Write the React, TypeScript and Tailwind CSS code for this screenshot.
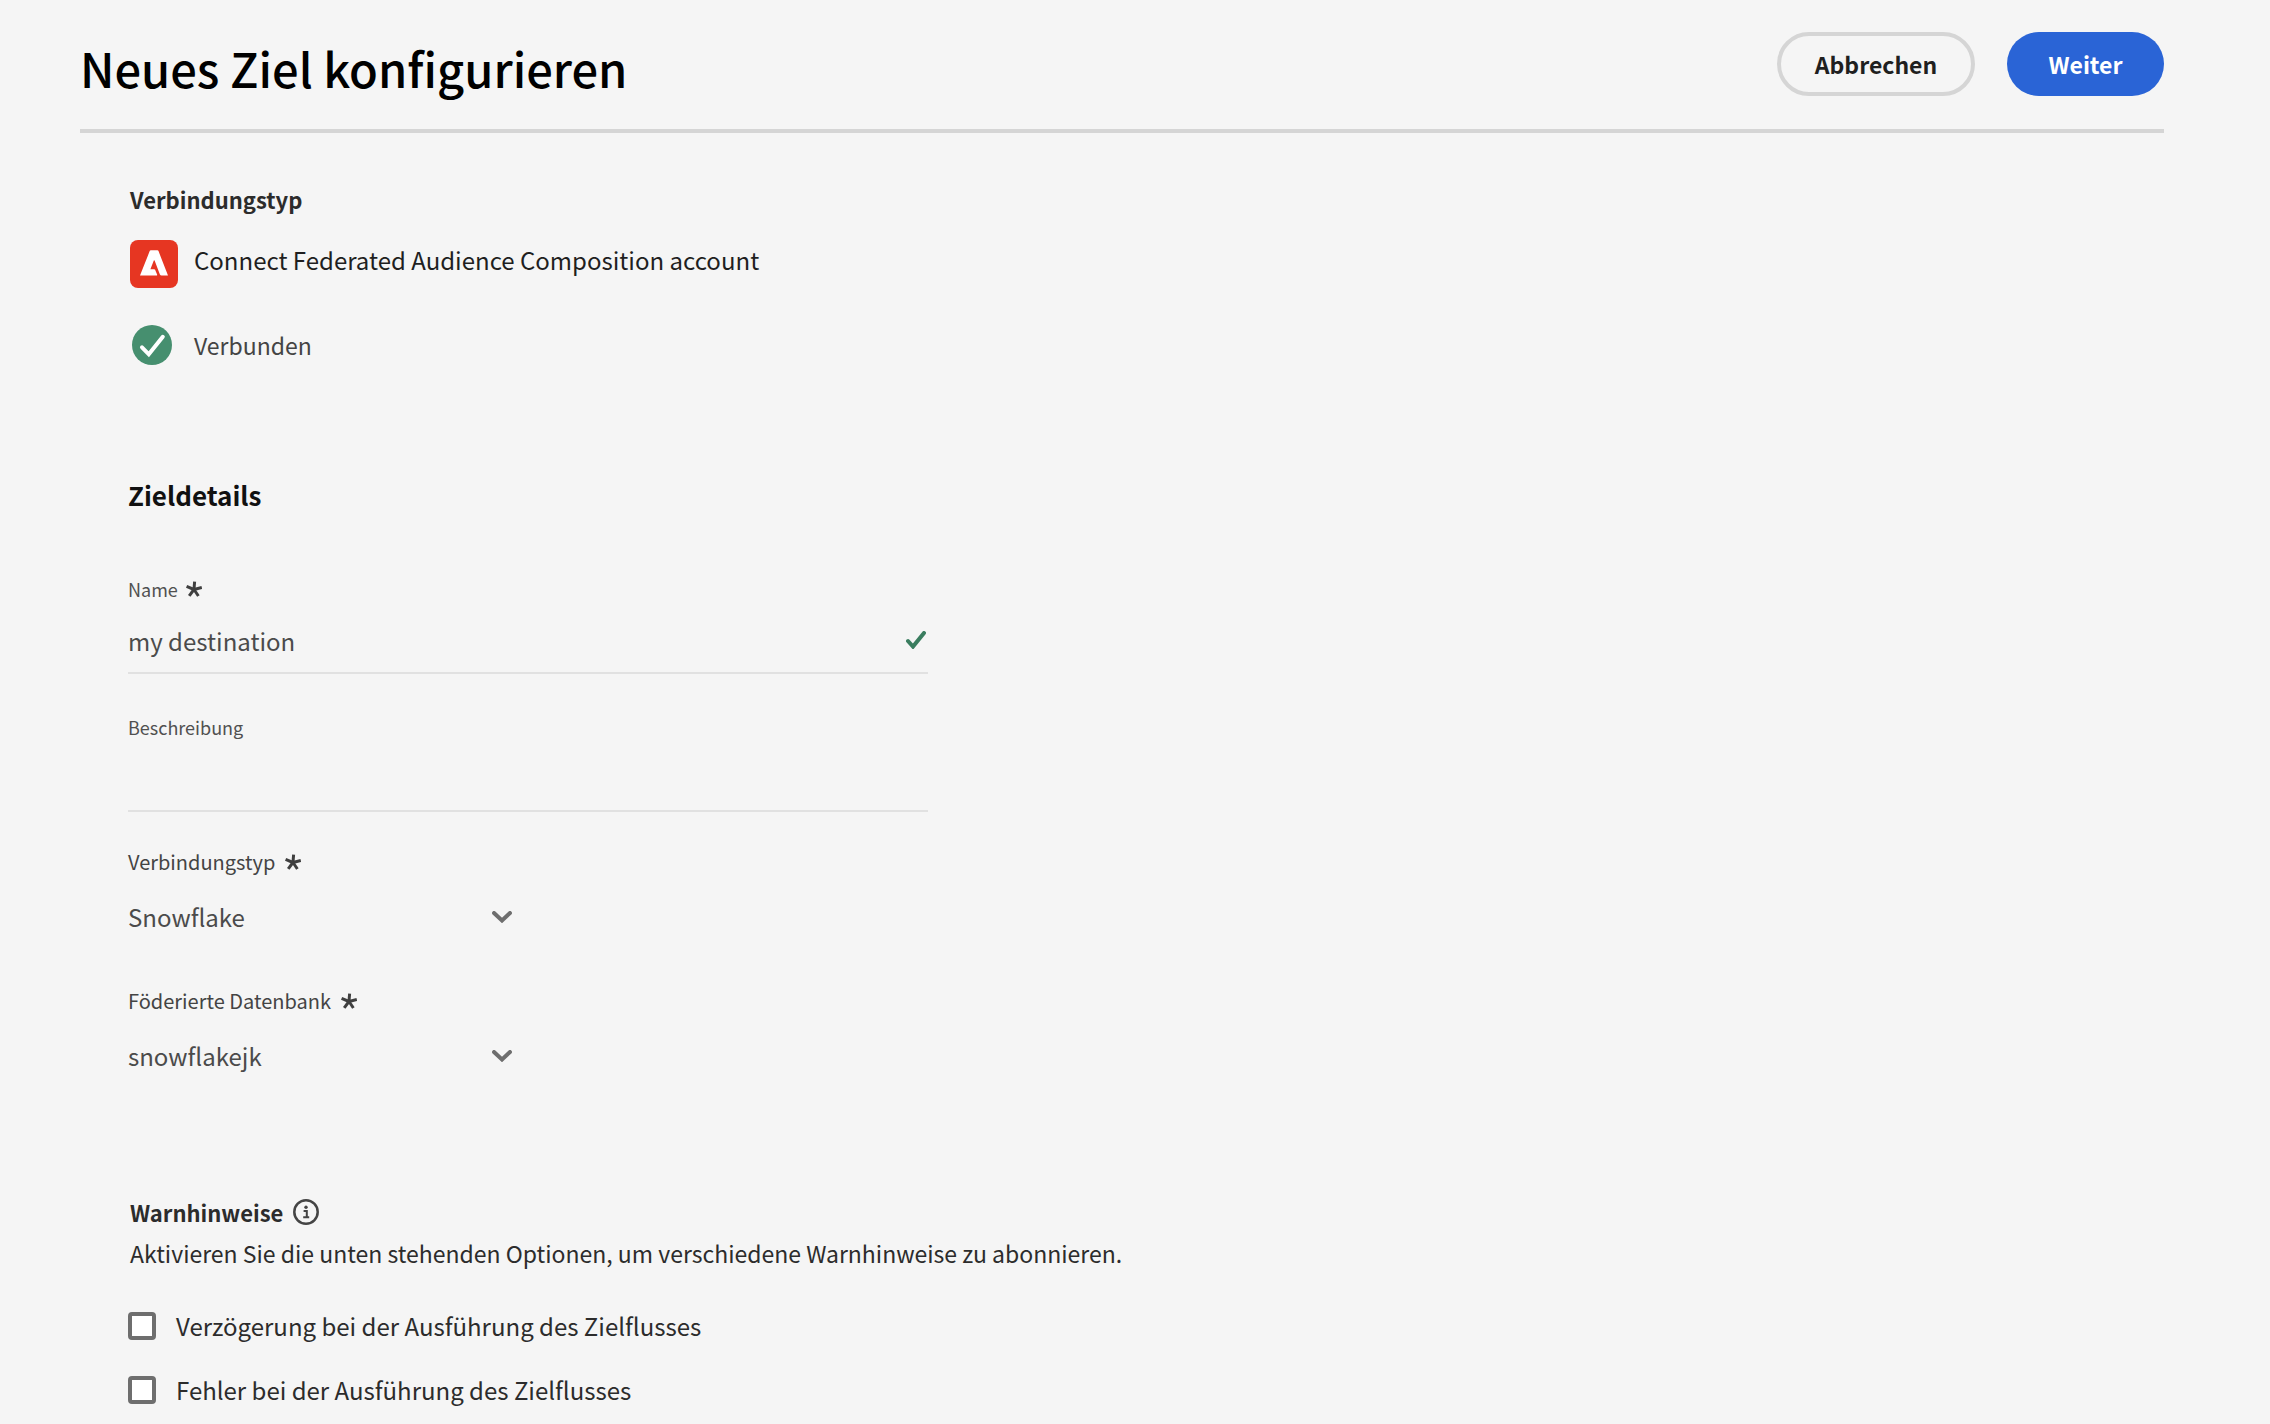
import type { ReactNode } from "react";

function Asterisk() {
  return (
    <svg viewBox="0 0 16 16" className="size-4 shrink-0 text-[#3f3f3f]" aria-hidden="true">
      <g stroke="currentColor" strokeWidth="3">
        <path d="M8 8.5 8.6 0.6" />
        <path d="M8 8.5 15.8 6.4" />
        <path d="M8 8.5 12.4 15" />
        <path d="M8 8.5 3.2 14.8" />
        <path d="M8 8.5 0.6 5.4" />
      </g>
    </svg>
  );
}

function Chevron() {
  return (
    <svg
      viewBox="0 0 20 12"
      className="pointer-events-none absolute top-1/2 right-0 h-3 w-5 -translate-y-1/2"
      fill="none"
      aria-hidden="true"
    >
      <path d="M2 2l8 7.5L18 2" stroke="#6e6e6e" strokeWidth="4" strokeLinecap="round" />
    </svg>
  );
}

function Picker({ id, label, value }: { id: string; label: string; value: string }) {
  return (
    <div className="flex flex-col gap-[21px]">
      <label htmlFor={id} className="flex items-center gap-2.5 text-[20px] leading-7 text-[#444444]">
        {label}
        <Asterisk />
      </label>
      <div className="relative w-96">
        <select id={id} className="h-10 w-full appearance-none bg-transparent text-[24px] leading-10 text-[#4b4b4b]">
          <option>{value}</option>
        </select>
        <Chevron />
      </div>
    </div>
  );
}

function TextField({
  id,
  label,
  value,
  required,
}: {
  id: string;
  label: string;
  value?: string;
  required?: boolean;
}) {
  return (
    <div className="w-full max-w-[800px]">
      <label htmlFor={id} className="flex items-center gap-2 text-[18px] leading-7 text-[#505050]">
        {label}
        {required && <Asterisk />}
      </label>
      <div className="relative mt-[5px] border-b-2 border-[#e1e1e1]">
        <input id={id} defaultValue={value} className="h-16 w-full bg-transparent text-[24px] text-[#4b4b4b]" />
        {value && (
          <svg
            viewBox="0 0 20 18"
            className="absolute top-1/2 right-0.5 h-[18px] w-5 -translate-y-1/2"
            fill="none"
            aria-hidden="true"
          >
            <path d="M2 10l5 5.6L18 2" stroke="#3a7d5f" strokeWidth="4" strokeLinecap="round" />
          </svg>
        )}
      </div>
    </div>
  );
}

function Check({ id, children }: { id: string; children: ReactNode }) {
  return (
    <div className="flex h-10 items-center gap-5">
      <input
        id={id}
        type="checkbox"
        className="size-7 shrink-0 appearance-none rounded-sm border-4 border-[#6e6e6e] bg-white"
      />
      <label htmlFor={id} className="text-[24px] leading-10 text-[#2c2c2c]">
        {children}
      </label>
    </div>
  );
}

export default function App() {
  return (
    <main
      lang="de"
      className="min-h-screen bg-[#f5f5f5] pr-[106px] pl-20 font-['Noto_Sans_CJK_JP','Noto_Sans',sans-serif] text-[#2c2c2c]"
    >
      <header className="flex items-start justify-between border-b-4 border-[#d5d5d5] pt-8 pb-[33px]">
        <h1 className="pt-2 text-[47px] leading-14 font-medium text-black">Neues Ziel konfigurieren</h1>
        <div className="flex gap-8">
          <button className="h-16 w-[198px] rounded-full border-4 border-[#d5d5d5] text-[23px] leading-8 font-bold text-[#1f1f1f]">
            Abbrechen
          </button>
          <button className="h-16 w-[157px] rounded-full bg-[#2a64d6] text-[23px] leading-8 font-bold text-white">
            Weiter
          </button>
        </div>
      </header>

      <div className="pt-12 pl-12">
        <section className="pl-0.5">
          <h2 className="text-[22px] leading-9 font-bold">Verbindungstyp</h2>
          <div className="mt-[23px] flex items-start gap-4">
            <svg viewBox="0 0 48 48" className="size-12" aria-hidden="true">
              <rect width="48" height="48" rx="8" fill="#e63622" />
              <path
                d="M20.8 10.3h6.6a1.2 1.2 0 0 1 1.1.8L38 35.6h-6.4a1.8 1.8 0 0 1-1.7-1.1L24.6 20.6a.4.4 0 0 0-.8 0L20.4 29.2h3.8a1 1 0 0 1 .9.6l2 4.6a.9.9 0 0 1-.8 1.2H10L19.7 11.1a1.2 1.2 0 0 1 1.1-.8z"
                fill="#fff"
              />
            </svg>
            <p className="text-[24px] leading-10 text-[#1f1f1f]">Connect Federated Audience Composition account</p>
          </div>
          <div className="mt-[37px] flex items-center gap-4">
            <div className="w-12 pl-0.5">
              <svg viewBox="0 0 40 40" className="size-10" aria-hidden="true">
                <circle cx="20" cy="20" r="20" fill="#468f6f" />
                <path
                  d="M10 22.3l6.8 7L30.8 11.8"
                  fill="none"
                  stroke="#fff"
                  strokeWidth="4"
                  strokeLinecap="round"
                />
              </svg>
            </div>
            <p className="text-[23px] leading-10 text-[#444444]">Verbunden</p>
          </div>
        </section>

        <section className="mt-[110px]">
          <h2 className="text-[26px] leading-10 font-bold text-[#111111]">Zieldetails</h2>
          <form className="mt-15">
            <div className="flex flex-col gap-[39px]">
              <TextField id="name" label="Name" value="my destination" required />
              <TextField id="description" label="Beschreibung" />
            </div>
            <div className="mt-9 flex flex-col gap-[50px]">
              <Picker id="connection" label="Verbindungstyp" value="Snowflake" />
              <Picker id="database" label="Föderierte Datenbank" value="snowflakejk" />
            </div>
          </form>
        </section>

        <section className="mt-[118px]">
          <div className="pl-0.5">
            <h2 className="flex items-center gap-2.5 text-[22px] leading-9 font-bold">
              Warnhinweise
              <svg viewBox="0 0 26 26" className="size-[26px]" fill="none" aria-hidden="true">
                <circle cx="13" cy="13" r="11.7" stroke="#444444" strokeWidth="2.5" />
                <circle cx="13" cy="8.2" r="1.7" fill="#444444" />
                <path d="M10.6 12h3.2v6.4M10.2 18.2h6" stroke="#444444" strokeWidth="2" />
              </svg>
            </h2>
            <p className="text-[23px] leading-[46px]">
              Aktivieren Sie die unten stehenden Optionen, um verschiedene Warnhinweise zu abonnieren.
            </p>
          </div>
          <div className="mt-[30px] flex flex-col gap-6">
            <Check id="delay">Verzögerung bei der Ausführung des Zielflusses</Check>
            <Check id="failure">Fehler bei der Ausführung des Zielflusses</Check>
          </div>
        </section>
      </div>
    </main>
  );
}
